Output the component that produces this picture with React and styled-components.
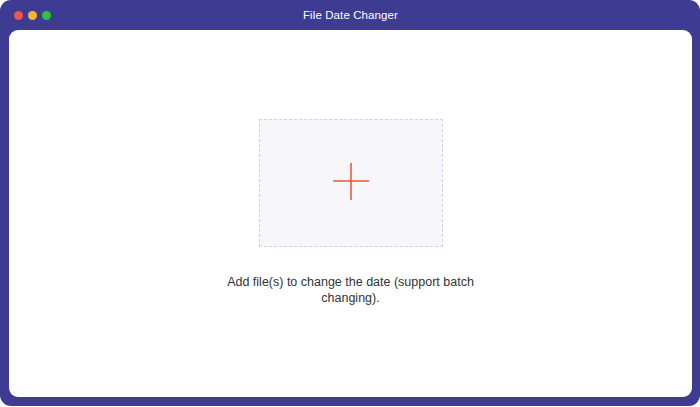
import React from "react";
import styled, { createGlobalStyle } from "styled-components";

const Global = createGlobalStyle`
  html, body { margin: 0; padding: 0; background: #ffffff; }
  body { font-family: "Liberation Sans", Arial, sans-serif; }
`;

const Window = styled.div`
  width: 700px;
  height: 406px;
  box-sizing: border-box;
  background: #3e3b93;
  border-radius: 11px;
  padding: 0 8px 9px 9px;
  display: flex;
  flex-direction: column;
`;

const TitleBar = styled.div`
  height: 30px;
  display: flex;
  align-items: center;
  position: relative;
`;

const Lights = styled.div`
  display: flex;
  gap: 5px;
  padding-left: 5px;
`;

const Light = styled.span`
  width: 9px;
  height: 9px;
  border-radius: 50%;
  background: ${(p) => p.$c};
`;

const Title = styled.div`
  position: absolute;
  left: 0;
  right: 0;
  text-align: center;
  color: #ffffff;
  font-family: "Liberation Sans", Arial, sans-serif;
  font-size: 11.5px;
  letter-spacing: 0.1px;
  pointer-events: none;
`;

const Content = styled.div`
  flex: 1;
  background: #ffffff;
  border-radius: 9px;
  display: flex;
  flex-direction: column;
  align-items: center;
  padding-top: 89px;
`;

const DropZone = styled.div`
  width: 184px;
  height: 128px;
  box-sizing: border-box;
  border: 1.5px dashed #d2d1df;
  background: #f6f6fb;
  display: flex;
  align-items: center;
  justify-content: center;
  padding-bottom: 4px;
`;

const Hint = styled.p`
  margin: 27px 0 0;
  width: 260px;
  text-align: center;
  font-family: "Liberation Sans", Arial, sans-serif;
  font-size: 12.5px;
  line-height: 16px;
  color: #333333;
`;

export default function App() {
  return (
    <>
      <Global />
      <Window>
        <TitleBar>
          <Lights>
            <Light $c="#f0564d" />
            <Light $c="#f5b829" />
            <Light $c="#2ec23a" />
          </Lights>
          <Title>File Date Changer</Title>
        </TitleBar>
        <Content>
          <DropZone>
            <svg width="38" height="38" viewBox="0 0 38 38">
              <path d="M19 1V38M1 19H37" stroke="#f45a2c" strokeWidth="1.6" fill="none" />
            </svg>
          </DropZone>
          <Hint>Add file(s) to change the date (support batch changing).</Hint>
        </Content>
      </Window>
    </>
  );
}
